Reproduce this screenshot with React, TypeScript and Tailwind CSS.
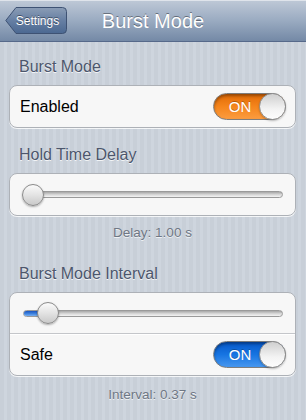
import React from 'react';

const font = "font-['Liberation_Sans',Arial,sans-serif]";

const Toggle = ({ color }: { color: 'orange' | 'blue' }) => {
  const track =
    color === 'orange'
      ? 'bg-[linear-gradient(#e16a06,#f5851c_50%,#fb9c40)]'
      : 'bg-[linear-gradient(#0658c9,#1674e2_50%,#4797ef)]';
  return (
    <div
      className={`relative flex h-[27px] w-[73px] items-center rounded-full border border-[#7d7d7d] ${track} shadow-[inset_0_2px_3px_rgba(0,0,0,0.35)]`}
    >
      <span className="w-[48px] pl-[4px] text-center text-[15px] leading-none text-white [text-shadow:0_-1px_0_rgba(0,0,0,0.25)]">
        ON
      </span>
      <span className="absolute right-[-1px] top-[-1px] h-[27px] w-[27px] rounded-full border border-[#8f8f8f] bg-[linear-gradient(#cfcfcf,#f3f3f3_60%,#fdfdfd)] shadow-[0_1px_2px_rgba(0,0,0,0.25)]" />
    </div>
  );
};

const Slider = ({ thumb, fill }: { thumb: string; fill?: string }) => (
  <div className="relative flex h-[22px] w-full items-center">
    <div className="relative h-[7px] w-full overflow-hidden rounded-full border border-[#9a9a9a] bg-[linear-gradient(#a8a8a8,#d9d9d9_55%,#f4f4f4)]">
      {fill && (
        <div className={`absolute left-0 top-0 h-full ${fill} bg-[linear-gradient(#1a55c0,#3f84e0_55%,#7ab0f0)]`} />
      )}
    </div>
    <div
      className={`absolute top-0 ${thumb} h-[22px] w-[22px] rounded-full border border-[#8a8a8a] bg-[linear-gradient(#fbfbfb,#e3e3e3_50%,#c9c9c9)] shadow-[0_1px_2px_rgba(0,0,0,0.3)]`}
    />
  </div>
);

const Header = ({ children, className = '' }: { children: React.ReactNode; className?: string }) => (
  <div className={`pl-[10px] text-[16px] leading-[20px] text-[#4c566c] [text-shadow:0_1px_0_rgba(255,255,255,0.8)] ${className}`}>
    {children}
  </div>
);

const Footer = ({ children, className = '' }: { children: React.ReactNode; className?: string }) => (
  <div className={`text-center text-[13.5px] leading-[16px] text-[#6f7784] [text-shadow:0_1px_0_rgba(255,255,255,0.7)] ${className}`}>
    {children}
  </div>
);

const cardClass =
  'rounded-[8px] border border-[#adb1b7] bg-[#f7f7f7] shadow-[0_1px_0_rgba(255,255,255,0.8)]';

export default function App() {
  return (
    <div
      className={`${font} h-[420px] w-full overflow-hidden bg-[repeating-linear-gradient(90deg,#c8cfd8_0px,#c8cfd8_4px,#ced5de_4px,#ced5de_7px)]`}
    >
      {/* nav bar */}
      <div className="grid h-[42px] grid-cols-[1fr_auto_1fr] items-center border-b border-[#56698a] bg-[linear-gradient(#bfc9d7,#9aabc1_50%,#7489a6)] shadow-[inset_0_1px_0_rgba(255,255,255,0.5)]">
        <div className="pl-[5px]">
          <button className="relative flex h-[27px] w-[62px] items-center justify-center pl-[3px]">
            <svg className="absolute left-0 top-0" width="62" height="27" viewBox="0 0 62 27">
              <defs>
                <linearGradient id="bb" x1="0" y1="0" x2="0" y2="1">
                  <stop offset="0" stopColor="#8b9db6" />
                  <stop offset="0.5" stopColor="#667fa3" />
                  <stop offset="1" stopColor="#4b6891" />
                </linearGradient>
              </defs>
              <path
                d="M11 0.5 H57.5 A4 4 0 0 1 61.5 4.5 V22.5 A4 4 0 0 1 57.5 26.5 H11 L0.8 13.5 Z"
                fill="url(#bb)"
                stroke="#3e5273"
              />
            </svg>
            <span className="relative text-[12px] text-white [text-shadow:0_-1px_0_rgba(0,0,0,0.45)]">Settings</span>
          </button>
        </div>
        <div className="text-[20px] text-white [text-shadow:0_-1px_0_rgba(0,0,0,0.4)]">Burst Mode</div>
        <div />
      </div>

      <div className="pl-[9px] pr-[10px]">
        <Header className="mt-[15px]">Burst Mode</Header>
        <div className={`mt-[8px] flex h-[43px] items-center justify-between pl-[10px] pr-[9px] ${cardClass}`}>
          <span className="text-[16px] text-black">Enabled</span>
          <Toggle color="orange" />
        </div>

        <Header className="mt-[17px]">Hold Time Delay</Header>
        <div className={`mt-[8px] flex h-[43px] items-center pl-[13px] pr-[12px] ${cardClass}`}>
          <Slider thumb="left-[-1px]" />
        </div>
        <Footer className="mt-[9px]">Delay: 1.00 s</Footer>

        <Header className="mt-[23px]">Burst Mode Interval</Header>
        <div className={`mt-[8px] ${cardClass}`}>
          <div className="flex h-[41px] items-center border-b border-[#c4c6ca] pl-[13px] pr-[12px] shadow-[0_1px_0_#ffffff]">
            <Slider thumb="left-[14px]" fill="w-[20px]" />
          </div>
          <div className="flex h-[41px] items-center justify-between pl-[10px] pr-[9px]">
            <span className="text-[16px] text-black">Safe</span>
            <Toggle color="blue" />
          </div>
        </div>
        <Footer className="mt-[11px]">Interval: 0.37 s</Footer>
      </div>
    </div>
  );
}
